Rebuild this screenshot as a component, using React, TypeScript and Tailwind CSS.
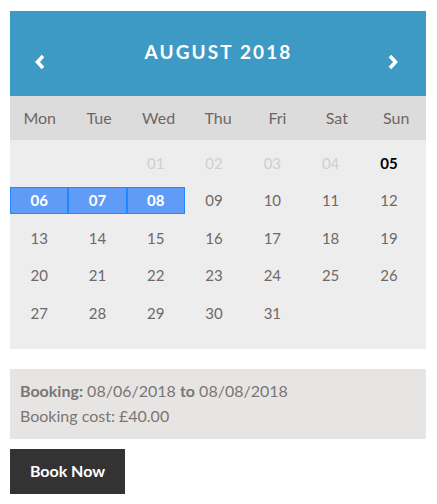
import React from "react";

const days = ["Mon", "Tue", "Wed", "Thu", "Fri", "Sat", "Sun"];

type Cell = { n: string; kind: "empty" | "past" | "today" | "sel" | "normal" };

function buildCells(): Cell[][] {
  const cells: Cell[] = [];
  cells.push({ n: "", kind: "empty" }, { n: "", kind: "empty" });
  for (let d = 1; d <= 31; d++) {
    const n = d < 10 ? "0" + d : String(d);
    let kind: Cell["kind"] = "normal";
    if (d <= 4) kind = "past";
    else if (d === 5) kind = "today";
    else if (d >= 6 && d <= 8) kind = "sel";
    cells.push({ n, kind });
  }
  while (cells.length % 7) cells.push({ n: "", kind: "empty" });
  const rows: Cell[][] = [];
  for (let i = 0; i < cells.length; i += 7) rows.push(cells.slice(i, i + 7));
  return rows;
}

function Chevron({ dir }: { dir: "l" | "r" }) {
  return (
    <svg width="12" height="16" viewBox="0 0 12 16" className="mt-[43px]">
      <polyline
        points={dir === "l" ? "9,2 3.5,8 9,14" : "3,2 8.5,8 3,14"}
        fill="none"
        stroke="white"
        strokeWidth="3.6"
        strokeLinejoin="miter"
      />
    </svg>
  );
}

export default function App() {
  const rows = buildCells();
  return (
    <div
      className="w-[437px] h-[504px] bg-white pt-[11px] px-[10px]"
      style={{ fontFamily: "Lato, 'Open Sans', sans-serif" }}
    >
      <div className="w-[416px]">
        <div className="h-[85px] bg-[#3d9ac4] flex items-start justify-between pl-[24px] pr-[27px] text-white">
          <Chevron dir="l" />
          <span className="text-[19px] font-bold tracking-[2.1px] mt-[27px] ml-[4px]">AUGUST 2018</span>
          <Chevron dir="r" />
        </div>
        <div className="h-[44px] bg-[#dcdcdc] grid grid-cols-7 items-center text-[16px] text-[#6e6664]">
          {days.map((d) => (
            <div key={d} className="text-center">
              {d}
            </div>
          ))}
        </div>
        <div className="bg-[#ededed] pt-[4px] pb-[17px]">
          {rows.map((r, i) => (
            <div key={i} className="grid grid-cols-[repeat(7,58.3px)] h-[37.5px] items-center">
              {r.map((c, j) => (
                <div
                  key={j}
                  className={
                    "h-[27px] flex items-center justify-center text-[15px] " +
                    (c.kind === "sel"
                      ? "bg-[#619bf8] border border-[#1f87ff] text-white font-bold"
                      : c.kind === "past"
                      ? "text-[#cfcfcf]"
                      : c.kind === "today"
                      ? "text-black font-bold"
                      : "text-[#6e6866]")
                  }
                >
                  {c.n}
                </div>
              ))}
            </div>
          ))}
        </div>
        <div className="mt-[20px] h-[70px] bg-[#e7e5e4] px-[10px] pt-[9px] text-[16px] text-[#7b7573] leading-[25px]">
          <div>
            <b>Booking:</b> 08/06/2018 <b>to</b> 08/08/2018
          </div>
          <div>Booking cost: £40.00</div>
        </div>
        <button className="mt-[10px] w-[115px] h-[45px] bg-[#333333] text-white font-bold text-[16px]">
          Book Now
        </button>
      </div>
    </div>
  );
}
